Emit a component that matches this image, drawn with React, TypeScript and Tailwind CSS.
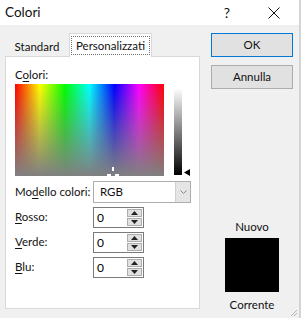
import React from 'react';

const font = { fontFamily: 'Lato, "Liberation Sans", sans-serif' };

const U: React.FC<{ children: React.ReactNode }> = ({ children }) => (
  <span className="underline underline-offset-[2px] decoration-[1px]">{children}</span>
);

const Spinner: React.FC<{ value: string }> = ({ value }) => (
  <div className="flex h-[21px] w-[51px] border border-[#7a7a7a] bg-white">
    <div className="flex flex-1 items-center pl-[3px] text-[12px] leading-none text-black">{value}</div>
    <div className="flex w-[16px] flex-col gap-[1px] py-[1px] pr-[1px]">
      <div className="flex flex-1 items-center justify-center border border-[#adadad] bg-[#e1e1e1]">
        <svg width="7" height="4" viewBox="0 0 7 4"><path d="M3.5 0 L7 4 L0 4 Z" fill="#222" /></svg>
      </div>
      <div className="flex flex-1 items-center justify-center border border-[#adadad] bg-[#e1e1e1]">
        <svg width="7" height="4" viewBox="0 0 7 4"><path d="M0 0 L7 0 L3.5 4 Z" fill="#222" /></svg>
      </div>
    </div>
  </div>
);

export default function App() {
  return (
    <div className="relative flex h-[318px] w-[301px] flex-col overflow-hidden border-r-2 border-[#d4d4d4] bg-[#f0f0f0] text-[11.5px] text-[#111]" style={font}>
      {/* title bar */}
      <div className="flex h-[25px] items-center bg-white pl-[5px]">
        <span className="flex-1 text-[13.5px]">Colori</span>
        <span className="mr-[38px] text-[14px]">?</span>
        <svg width="12" height="12" viewBox="0 0 12 12" className="mr-[19px]">
          <path d="M0.5 0.5 L11.5 11.5 M11.5 0.5 L0.5 11.5" stroke="#111" strokeWidth="1" />
        </svg>
      </div>

      <div className="flex flex-1 pt-[8px]">
        {/* left: tabs + panel */}
        <div className="ml-[5px] flex w-[195px] flex-col">
          <div className="flex h-[23px] items-end whitespace-nowrap">
            <div className="flex h-[21px] w-[64px] items-center justify-center border border-b-0 border-[#f0f0f0] pt-[1px]">Standard</div>
            <div className="relative -mb-px flex h-[24px] w-[83px] items-center justify-center border border-b-0 border-[#d9d9d9] bg-white">
              <span className="border border-dotted border-[#707070] px-[4px] py-[1px] leading-[15px]">Personalizzati</span>
            </div>
          </div>
          <div className="flex h-[253px] flex-col border border-[#d9d9d9] bg-white pl-[9px] pt-[11px]">
            <div className="h-[16px] leading-[14px]">C<U>o</U>lori:</div>
            <div className="flex">
              <div className="relative h-[92px] w-[149px] bg-[linear-gradient(to_right,#ff0000_0%,#ffff00_16.66%,#00ff00_33.33%,#00ffff_50%,#0000ff_66.66%,#ff00ff_83.33%,#ff0000_100%)]">
                <div className="h-full w-full bg-[linear-gradient(to_bottom,rgba(128,128,128,0)_0%,rgba(128,128,128,1)_100%)]" />
                <svg width="13" height="10" viewBox="0 0 13 10" className="absolute left-[92px] top-[83px]">
                  <rect x="5" y="0" width="2" height="4" fill="#fff" />
                  <rect x="0" y="7" width="4" height="2" fill="#fff" />
                  <rect x="8" y="7" width="4" height="2" fill="#fff" />
                </svg>
              </div>
              <div className="ml-[10px] mt-[4px] h-[87px] w-[8px] bg-[linear-gradient(to_bottom,#ffffff,#000000)]" />
              <svg width="6" height="7" viewBox="0 0 6 7" className="ml-[2px] mt-[85px]">
                <path d="M0 3.5 L6 0 L6 7 Z" fill="#000" />
              </svg>
            </div>
            <div className="mt-[5px] flex h-[22px] items-center whitespace-nowrap">
              <div className="w-[78px]">Mo<U>d</U>ello colori:</div>
              <div className="flex h-[22px] w-[98px] border border-[#adadad] bg-white">
                <div className="flex flex-1 items-center pl-[6px]">RGB</div>
                <div className="flex w-[15px] items-center justify-center border-l border-[#d0d0d0] bg-[#e5e5e5]">
                  <svg width="7" height="4" viewBox="0 0 7 4"><path d="M0.5 0.5 L3.5 3.5 L6.5 0.5" stroke="#888" fill="none" /></svg>
                </div>
              </div>
            </div>
            <div className="mt-[4px] flex flex-col gap-[4px]">
              <div className="flex">
                <div className="w-[78px] pt-[1px]"><U>R</U>osso:</div>
                <Spinner value="0" />
              </div>
              <div className="flex">
                <div className="w-[78px] pt-[1px]"><U>V</U>erde:</div>
                <Spinner value="0" />
              </div>
              <div className="flex">
                <div className="w-[78px] pt-[1px]"><U>B</U>lu:</div>
                <Spinner value="0" />
              </div>
            </div>
          </div>
        </div>

        {/* right: buttons + preview */}
        <div className="ml-[11px] flex w-[82px] flex-col items-center">
          <button className="h-[24px] w-[82px] border border-[#0078d7] bg-[#e1e1e1]">OK</button>
          <button className="mt-[8px] h-[24px] w-[82px] border border-[#adadad] bg-[#e1e1e1]">Annulla</button>
          <div className="mt-[130px] leading-[16px]">Nuovo</div>
          <div className="mt-[3px] h-[54px] w-[54px] bg-black" />
          <div className="mt-[5px] leading-[16px]">Corrente</div>
        </div>
      </div>

      <svg width="8" height="8" viewBox="0 0 8 8" className="absolute bottom-[1px] right-[1px]">
        <path d="M7 1 L1 7 M7 4 L4 7" stroke="#b5b5b5" strokeWidth="1" />
      </svg>
    </div>
  );
}
